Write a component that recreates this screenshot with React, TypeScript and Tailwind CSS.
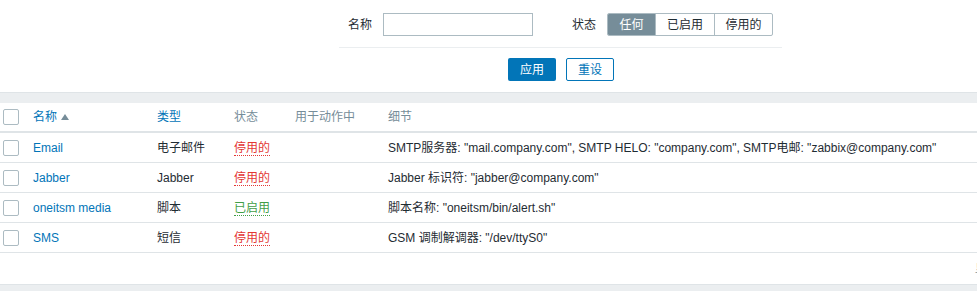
const font = { fontFamily: '"Liberation Sans", Arial, "Noto Sans CJK SC", sans-serif' }

type Media = { name: string; type: string; enabled: boolean; details: string }

const rows: Media[] = [
  {
    name: 'Email',
    type: '电子邮件',
    enabled: false,
    details: 'SMTP服务器: "mail.company.com", SMTP HELO: "company.com", SMTP电邮: "zabbix@company.com"',
  },
  { name: 'Jabber', type: 'Jabber', enabled: false, details: 'Jabber 标识符: "jabber@company.com"' },
  { name: 'oneitsm media', type: '脚本', enabled: true, details: '脚本名称: "oneitsm/bin/alert.sh"' },
  { name: 'SMS', type: '短信', enabled: false, details: 'GSM 调制解调器: "/dev/ttyS0"' },
]

function Checkbox() {
  return <div className="w-4 h-4 border border-[#acbbc2] rounded-[2px] bg-white" />
}

export default function App() {
  return (
    <div className="w-[977px] h-[291px] overflow-hidden bg-white text-[12px] text-[#1f2c33]" style={font}>
      {/* Filter */}
      <div className="h-[92px] pt-[13px]">
        <div className="ml-[339px] w-[443px]">
          <div className="flex items-center pl-[9px] h-[23px]">
            <span>名称</span>
            <input className="ml-[11px] w-[150px] h-[23px] border border-[#acbbc2] bg-white outline-none px-1" />
            <span className="ml-[39px]">状态</span>
            <div className="ml-[11px] flex h-[23px] border border-[#acbbc2] rounded-[2px] overflow-hidden">
              <div className="w-[47px] flex items-center justify-center bg-[#768d99] text-white">任何</div>
              <div className="w-[59px] flex items-center justify-center border-l border-[#acbbc2]">已启用</div>
              <div className="w-[58px] flex items-center justify-center border-l border-[#acbbc2]">停用的</div>
            </div>
          </div>
          <div className="mt-[11px] h-px bg-[#ebeef0]" />
          <div className="mt-[10px] flex justify-center gap-[10px] pl-px">
            <button className="w-12 h-[23px] rounded-[2px] bg-[#0275b8] text-white">应用</button>
            <button className="w-12 h-[23px] rounded-[2px] border border-[#0275b8] text-[#0275b8] bg-white">重设</button>
          </div>
        </div>
      </div>

      <div className="h-[11px] bg-[#ebeef0] border-t border-[#dfe4e7]" />

      {/* Table */}
      <div className="flex items-center h-[30px] border-b-2 border-[#dfe4e7]">
        <div className="w-[33px] pl-[3px]"><Checkbox /></div>
        <div className="w-[124px] text-[#0275b8] flex items-center gap-[4px]">
          名称
          <span className="w-0 h-0 border-x-[4px] border-x-transparent border-b-[6px] border-b-[#768d99]" />
        </div>
        <div className="w-[77px] text-[#0275b8]">类型</div>
        <div className="w-[61px] text-[#768d99]">状态</div>
        <div className="w-[93px] text-[#768d99]">用于动作中</div>
        <div className="flex-1 text-[#768d99]">细节</div>
      </div>
      {rows.map(r => (
        <div key={r.name} className="flex items-center h-[30px] pt-px border-b border-[#dfe4e7]">
          <div className="w-[33px] pl-[3px]"><Checkbox /></div>
          <div className="w-[124px] text-[#0275b8]">{r.name}</div>
          <div className="w-[77px]">{r.type}</div>
          <div className="w-[61px]">
            <span
              className={
                r.enabled
                  ? 'text-[#429e47] border-b border-dotted border-[#429e47]'
                  : 'text-[#e33734] border-b border-dotted border-[#e33734]'
              }
            >
              {r.enabled ? '已启用' : '停用的'}
            </span>
          </div>
          <div className="w-[93px]" />
          <div className="flex-1 whitespace-nowrap">{r.details}</div>
        </div>
      ))}
      <div className="h-[31px] flex items-center pl-[975px] whitespace-nowrap text-[#768d99]">
        显示 已自动发现的 4中的4
      </div>
      <div className="h-[10px] bg-[#ebeef0] border-t border-[#dfe4e7]" />
    </div>
  )
}
